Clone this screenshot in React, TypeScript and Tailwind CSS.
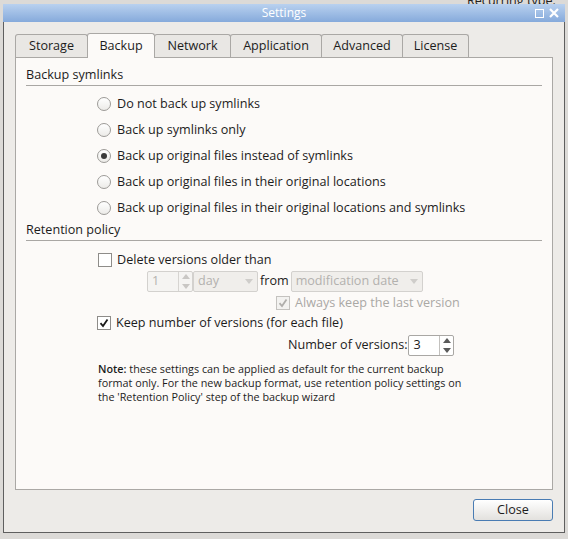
import React from 'react';

const font = { fontFamily: '"Open Sans", "Noto Sans", sans-serif' };

const tabs = ['Storage', 'Backup', 'Network', 'Application', 'Advanced', 'License'];
const tabWidths: Record<string, string> = {
  Storage: 'w-[73px]',
  Backup: 'w-[68px]',
  Network: 'w-[77px]',
  Application: 'w-[92px]',
  Advanced: 'w-[82px]',
  License: 'w-[67px]',
};

const symlinkOptions = [
  'Do not back up symlinks',
  'Back up symlinks only',
  'Back up original files instead of symlinks',
  'Back up original files in their original locations',
  'Back up original files in their original locations and symlinks',
];

// Radio em estilo GTK
function Radio({ checked }: { checked?: boolean }) {
  return (
    <span className="w-[14px] h-[14px] rounded-full border border-[#9c9a97] bg-gradient-to-b from-white to-[#ecebe8] flex items-center justify-center shrink-0">
      {checked && <span className="w-[6px] h-[6px] rounded-full bg-[#3a3a3a]" />}
    </span>
  );
}

function Check({ checked, disabled }: { checked?: boolean; disabled?: boolean }) {
  return (
    <span
      className={`w-[14px] h-[14px] border flex items-center justify-center shrink-0 ${
        disabled ? 'border-[#c4c2bf] bg-[#f3f2f0]' : 'border-[#8e8c89] bg-white'
      }`}
    >
      {checked && (
        <svg width="10" height="10" viewBox="0 0 10 10">
          <path
            d="M1.5 5.2 L4 8 L8.5 1.5"
            fill="none"
            stroke={disabled ? '#b0aeab' : '#1a1a1a'}
            strokeWidth="1.8"
          />
        </svg>
      )}
    </span>
  );
}

function SpinArrows({ disabled }: { disabled?: boolean }) {
  const c = disabled ? '#c9c7c4' : '#5a5a5a';
  return (
    <span className={`w-[14px] h-full flex flex-col border-l ${disabled ? 'border-[#d6d4d1]' : 'border-[#c3c1be]'}`}>
      <span className="flex-1 flex items-center justify-center">
        <svg width="8" height="5" viewBox="0 0 8 5"><path d="M0 5 L4 0 L8 5 Z" fill={c} /></svg>
      </span>
      <span className="flex-1 flex items-center justify-center">
        <svg width="8" height="5" viewBox="0 0 8 5"><path d="M0 0 L4 5 L8 0 Z" fill={c} /></svg>
      </span>
    </span>
  );
}

export default function App() {
  return (
    <div className="w-[568px] h-[539px] bg-[#dcdad7] relative overflow-hidden" style={font}>
      {/* janela de fundo parcialmente visível */}
      <span className="absolute left-[467px] top-[-8px] text-[12.6px] text-[#222]">Recurring type:</span>

      <div className="relative ml-[3px] mt-[4px] w-[562px] h-[529px] border border-[#5f5f5f] border-t-0 bg-[#edebe8] flex flex-col">
        {/* Barra de título */}
        <div className="h-[18px] -mx-px bg-gradient-to-b from-[#b9d1ef] to-[#86aadb] flex items-center relative">
          <span className="flex-1 text-center text-white text-[12px] font-medium">Settings</span>
          <div className="absolute right-[6px] top-0 h-full flex items-center gap-[5px]">
            <span className="w-[9px] h-[9px] border-[1.5px] border-white" />
            <svg width="10" height="10" viewBox="0 0 10 10">
              <path d="M1 1 L9 9 M9 1 L1 9" stroke="white" strokeWidth="2.2" />
            </svg>
          </div>
        </div>

        <div className="flex-1 flex flex-col px-[11px] pt-[11px]">
          {/* Abas */}
          <div className="flex items-end h-[24px]">
            {tabs.map((t) => {
              const active = t === 'Backup';
              return (
                <div
                  key={t}
                  className={`${tabWidths[t]} flex items-center justify-center text-[12.6px] text-[#1c1c1c] border border-[#aaa8a5] rounded-t-[3px] -mr-px ${
                    active ? 'h-[25px] bg-[#fcfaf8] border-b-0 relative z-10 mb-[-1px]' : 'h-[23px] bg-[#e9e7e4] border-b-0'
                  }`}
                >
                  {t}
                </div>
              );
            })}
          </div>

          {/* Painel */}
          <div className="h-[433px] border border-[#aaa8a5] bg-[#fcfaf8] text-[#1c1c1c] text-[12.6px] flex flex-col px-[10px] pt-[7px]">
            <div className="h-[20px] flex items-center">Backup symlinks</div>
            <div className="h-px bg-[#a9a7a4]" />
            <div className="mt-[5px] pl-[71px] flex flex-col">
              {symlinkOptions.map((o, i) => (
                <div key={o} className="h-[26px] flex items-center gap-[6px]">
                  <Radio checked={i === 2} />
                  <span>{o}</span>
                </div>
              ))}
            </div>

            <div className="h-[19px] flex items-center">Retention policy</div>
            <div className="h-px bg-[#a9a7a4]" />

            <div className="mt-[9px] pl-[72px] flex flex-col">
              <div className="h-[20px] flex items-center gap-[5px]">
                <Check />
                <span>Delete versions older than</span>
              </div>

              <div className="h-[23px] flex items-center pl-[49px]">
                <span className="w-[46px] h-[21px] border border-[#d3d1ce] rounded-[2px] bg-[#f5f4f2] flex items-center">
                  <span className="flex-1 pl-[4px] text-[#b3b1ae]">1</span>
                  <SpinArrows disabled />
                </span>
                <span className="w-[65px] h-[21px] border border-[#d3d1ce] rounded-[2px] bg-[#f0eeeb] flex items-center justify-between px-[4px] text-[#b3b1ae]">
                  day
                  <svg width="8" height="5" viewBox="0 0 8 5"><path d="M0 0 L4 5 L8 0 Z" fill="#cfcdca" /></svg>
                </span>
                <span className="px-[2px]">from</span>
                <span className="w-[132px] h-[21px] border border-[#d3d1ce] rounded-[2px] bg-[#f0eeeb] flex items-center justify-between px-[4px] text-[#b3b1ae]">
                  modification date
                  <svg width="8" height="5" viewBox="0 0 8 5"><path d="M0 0 L4 5 L8 0 Z" fill="#cfcdca" /></svg>
                </span>
              </div>

              <div className="h-[20px] flex items-center gap-[5px] pl-[178px] text-[#aaa8a5]">
                <Check checked disabled />
                <span>Always keep the last version</span>
              </div>

              <div className="h-[20px] flex items-center gap-[5px] -ml-px">
                <Check checked />
                <span>Keep number of versions (for each file)</span>
              </div>

              <div className="h-[23px] mt-[1px] flex items-center pl-[190px]">
                <span>Number of versions:</span>
                <span className="ml-[1px] w-[46px] h-[21px] border border-[#a9a7a4] rounded-[2px] bg-white flex items-center">
                  <span className="flex-1 pl-[4px]">3</span>
                  <SpinArrows />
                </span>
              </div>

              <p className="mt-[5px] text-[10.8px] leading-[14px] text-[#1c1c1c]">
                <span className="font-semibold">Note:</span> these settings can be applied as default for the current backup
                <br />
                format only. For the new backup format, use retention policy settings on
                <br />
                the 'Retention Policy' step of the backup wizard
              </p>
            </div>
          </div>

          {/* Rodapé */}
          <div className="flex justify-end pt-[9px]">
            <button className="w-[80px] h-[22px] border border-[#4a7cb3] rounded-[3px] bg-gradient-to-b from-white to-[#e3e1de] text-[12.6px] text-[#1c1c1c]">
              Close
            </button>
          </div>
        </div>
      </div>
    </div>
  );
}
